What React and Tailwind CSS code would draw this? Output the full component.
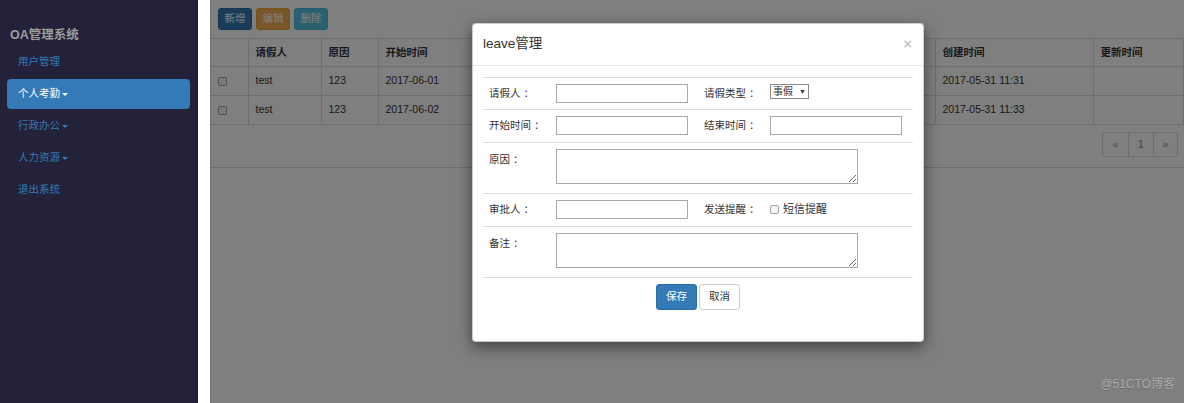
import React from 'react'

const font = "font-['Liberation_Sans','Noto_Sans_CJK_SC',sans-serif]"

function Caret({ className }) {
  return (
    <span className={`inline-block w-0 h-0 ml-[2px] align-middle border-t-[3px] border-x-[3px] border-x-transparent ${className}`} />
  )
}

function Sidebar() {
  const items = [
    { label: '用户管理' },
    { label: '个人考勤', caret: true, active: true },
    { label: '行政办公', caret: true },
    { label: '人力资源', caret: true },
    { label: '退出系统' },
  ]
  return (
    <aside className="w-[198px] shrink-0 bg-[#24223a] border-r border-[#1b1a2c]">
      <div className="pl-[10px] pt-[27px] text-[12.5px] leading-[16px] font-bold text-[#9d9d9d]">OA管理系统</div>
      <ul className="mt-[4px] px-[7px] flex flex-col gap-[2px]">
        {items.map((it) => (
          <li
            key={it.label}
            className={
              it.active
                ? 'h-[30px] flex items-center pl-[11px] rounded-[4px] bg-[#337ab7] text-white text-[10.5px]'
                : 'h-[30px] flex items-center pl-[11px] rounded-[4px] text-[#337ab7] text-[10.5px]'
            }
          >
            {it.label}
            {it.caret && <Caret className={it.active ? 'border-t-white' : 'border-t-[#337ab7]'} />}
          </li>
        ))}
      </ul>
    </aside>
  )
}

function Check() {
  return <span className="inline-block w-[9px] h-[9px] border border-[#a3a3a3] rounded-[2px] bg-[#f4f4f4] align-middle" />
}

function DataTable() {
  const head = ['', '请假人', '原因', '开始时间', '结束时间', '请假类型', '审批人', '状态', '创建时间', '更新时间']
  const rows = [
    ['test', '123', '2017-06-01', '2017-06-02', '事假', 'admin', '待审批', '2017-05-31 11:31', ''],
    ['test', '123', '2017-06-02', '2017-06-03', '事假', 'admin', '待审批', '2017-05-31 11:33', ''],
  ]
  return (
    <table className="w-full table-fixed border-collapse text-[10.5px] text-[#333]">
      <colgroup>
        <col className="w-[37px]" />
        <col className="w-[73px]" />
        <col className="w-[57px]" />
        <col className="w-[115px]" />
        <col className="w-[115px]" />
        <col className="w-[109px]" />
        <col className="w-[109px]" />
        <col className="w-[109px]" />
        <col className="w-[158px]" />
        <col />
      </colgroup>
      <thead>
        <tr className="h-[28px] border-t border-b border-[#ddd]">
          {head.map((h, i) => (
            <th key={i} className="text-left font-bold px-[7px] border-r border-[#ddd]">{h}</th>
          ))}
        </tr>
      </thead>
      <tbody>
        {rows.map((r, i) => (
          <tr key={i} className="h-[29px] border-b border-[#ddd]">
            <td className="px-[7px] border-r border-[#ddd]"><Check /></td>
            {r.map((c, j) => (
              <td key={j} className="px-[7px] border-r border-[#ddd] whitespace-nowrap">{c}</td>
            ))}
          </tr>
        ))}
      </tbody>
    </table>
  )
}

function Input({ className }) {
  return <input className={`block h-[19px] border border-[#a9a9a9] bg-white outline-none ${className}`} />
}

function Label({ text, className }) {
  return (
    <div className={className}>
      {text}
      <span className="ml-[3px]">：</span>
    </div>
  )
}

function Modal() {
  return (
    <div className="absolute left-[262px] top-[23px] w-[452px] h-[319px] bg-white rounded-[4px] border border-black/20 shadow-[0_5px_15px_rgba(0,0,0,0.5)] text-[#333]">
      <div className="h-[42px] flex items-center justify-between px-[10px] border-b border-[#e5e5e5]">
        <span className="text-[13.5px]">leave管理</span>
        <span className="text-[15px] font-bold text-[#c8c8c8] mr-[1px]">×</span>
      </div>
      <div className="px-[10px] pt-[11px] text-[10.5px]">
        <div className="border-b border-[#ddd]">
          <div className="flex h-[32px] border-t border-[#ddd] pt-[6px]">
            <Label text="请假人" className="w-[73px] pl-[6px] leading-[19px]" />
            <div className="w-[148px]"><Input className="w-[132px]" /></div>
            <Label text="请假类型" className="w-[66px] leading-[19px]" />
            <div className="w-[39px] h-[15px] border border-[#8a8a8a] flex items-center justify-between px-[2px] text-[10px] leading-none bg-white">
              <span>事假</span>
              <span className="text-[7px]">▼</span>
            </div>
          </div>
          <div className="flex h-[33px] border-t border-[#ddd] pt-[6px]">
            <Label text="开始时间" className="w-[73px] pl-[6px] leading-[19px]" />
            <div className="w-[148px]"><Input className="w-[132px]" /></div>
            <Label text="结束时间" className="w-[66px] leading-[19px]" />
            <Input className="w-[132px]" />
          </div>
          <div className="flex h-[51px] border-t border-[#ddd] pt-[6px]">
            <Label text="原因" className="w-[73px] pl-[6px] pt-[2px] leading-[16px]" />
            <textarea className="block w-[302px] h-[35px] border border-[#a9a9a9] outline-none" />
          </div>
          <div className="flex h-[33px] border-t border-[#ddd] pt-[6px]">
            <Label text="审批人" className="w-[73px] pl-[6px] leading-[19px]" />
            <div className="w-[148px]"><Input className="w-[132px]" /></div>
            <Label text="发送提醒" className="w-[66px] leading-[19px]" />
            <div className="flex items-center gap-[4px] h-[19px] leading-[19px] text-[11px]">
              <Check />
              <span>短信提醒</span>
            </div>
          </div>
          <div className="flex h-[51px] border-t border-[#ddd] pt-[6px]">
            <Label text="备注" className="w-[73px] pl-[6px] pt-[2px] leading-[16px]" />
            <textarea className="block w-[302px] h-[35px] border border-[#a9a9a9] outline-none" />
          </div>
        </div>
        <div className="flex justify-center gap-[2px] pt-[6px]">
          <button className="w-[41px] h-[26px] rounded-[3px] bg-[#337ab7] border border-[#2e6da4] text-white">保存</button>
          <button className="w-[41px] h-[26px] rounded-[3px] bg-white border border-[#ccc] text-[#333]">取消</button>
        </div>
      </div>
    </div>
  )
}

export default function App() {
  return (
    <div className={`flex w-[1184px] h-[403px] overflow-hidden bg-white ${font}`}>
      <Sidebar />
      <div className="w-[12px] shrink-0 bg-white" />
      <main className="relative flex-1">
        <div className="h-full border-l border-[#ddd] bg-white">
          <div className="flex gap-[4px] pl-[7px] pt-[8px]">
            <button className="w-[34px] h-[22px] rounded-[3px] bg-[#337ab7] border border-[#2e6da4] text-white text-[10.5px]">新增</button>
            <button className="w-[34px] h-[22px] rounded-[3px] bg-[#f0ad4e] border border-[#eea236] text-white text-[10.5px]">编辑</button>
            <button className="w-[34px] h-[22px] rounded-[3px] bg-[#5bc0de] border border-[#46b8da] text-white text-[10.5px]">删除</button>
          </div>
          <div className="mt-[8px]">
            <DataTable />
          </div>
          <div className="flex justify-end pr-[6px] pt-[7px] pb-[10px] border-b border-[#ddd]">
            <ul className="flex h-[25px] border border-[#ddd] rounded-[3px] text-[10.5px] text-[#888]">
              <li className="w-[25px] flex items-center justify-center">«</li>
              <li className="w-[25px] flex items-center justify-center border-l border-[#ddd]">1</li>
              <li className="w-[24px] flex items-center justify-center border-l border-[#ddd]">»</li>
            </ul>
          </div>
        </div>
        <div className="absolute inset-0 bg-black/50" />
        <Modal />
        <div className="absolute right-[9px] bottom-[10px] text-[12px] text-[#a8a8a8] [text-shadow:0_1px_0_rgba(0,0,0,0.15)]">@51CTO博客</div>
      </main>
    </div>
  )
}
